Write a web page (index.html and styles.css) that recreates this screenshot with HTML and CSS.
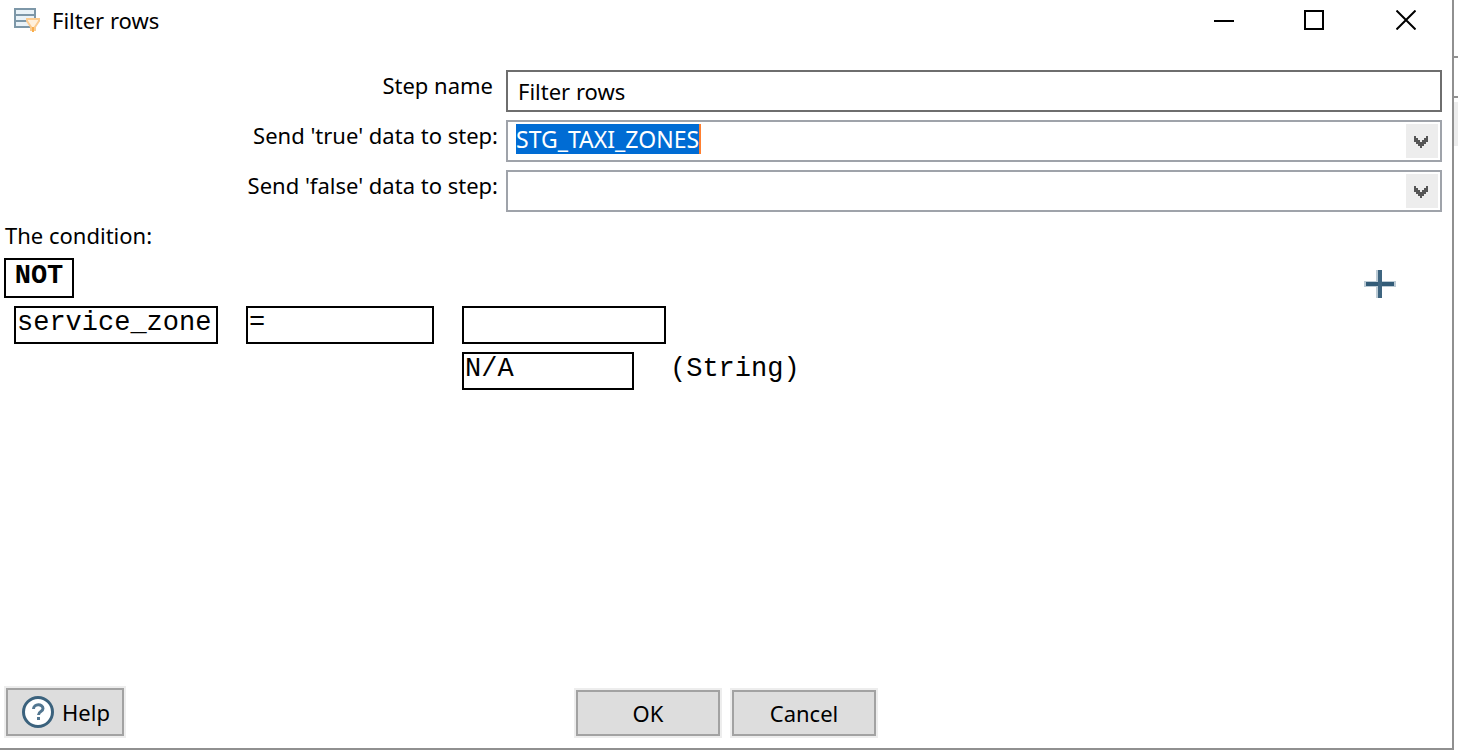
FILE: index.html
```html
<!DOCTYPE html>
<html lang="en">
<head>
<meta charset="utf-8">
<title>Filter rows</title>
<link rel="stylesheet" href="styles.css">
</head>
<body>
<main class="dialog">
  <header class="titlebar">
    <svg class="app-icon" width="26" height="24" viewBox="0 0 26 24" aria-hidden="true">
      <path d="M1 1h20v18H1z" fill="#e9f2f8" stroke="#7d97a8" stroke-width="2"/>
      <path d="M1 7h20M1 13h20" stroke="#7d97a8" stroke-width="2"/>
      <path d="M13 11h12v2l-4 6v3h-4v-3l-4-6z" fill="#fff0dc" stroke="#fbcb90" stroke-width="2"/>
      <path d="M19 19v5" stroke="#f9ae4c" stroke-width="2"/>
    </svg>
    <h1 class="title">Filter rows</h1>
    <button class="win-btn" type="button" aria-label="Minimize">
      <svg width="24" height="20" viewBox="0 0 24 20"><path d="M4 11h20" stroke="#000" stroke-width="2"/></svg>
    </button>
    <button class="win-btn" type="button" aria-label="Maximize">
      <svg width="20" height="20" viewBox="0 0 20 20"><path d="M1 1h18v18H1z" fill="none" stroke="#000" stroke-width="2"/></svg>
    </button>
    <button class="win-btn" type="button" aria-label="Close">
      <svg width="20" height="20" viewBox="0 0 20 20"><path d="M0.500 0.500l19 19M19.500 0.500l-19 19" stroke="#000" stroke-width="2"/></svg>
    </button>
  </header>

  <form class="form">
    <label class="label label-plain" for="step-name">Step name</label>
    <input class="text-input" id="step-name" type="text" value="Filter rows">

    <label class="label" for="true-step">Send 'true' data to step:</label>
    <div class="combo">
      <input class="combo-input combo-selected" id="true-step" type="text" role="combobox" aria-expanded="false" value="STG_TAXI_ZONES">
      <button class="combo-btn" type="button" aria-label="Show steps for true">
        <svg width="16" height="12" viewBox="0 0 16 12"><path d="M0 0h2v2h2v2h2v2h2v-2h2v-2h2v-2h2v6h-2v2h-2v2h-2v2h-2v-2h-2v-2h-2v-2h-2z" fill="#555" shape-rendering="crispEdges"/></svg>
      </button>
    </div>

    <label class="label" for="false-step">Send 'false' data to step:</label>
    <div class="combo">
      <input class="combo-input combo-empty" id="false-step" type="text" role="combobox" aria-expanded="false">
      <button class="combo-btn" type="button" aria-label="Show steps for false">
        <svg width="16" height="12" viewBox="0 0 16 12"><path d="M0 0h2v2h2v2h2v2h2v-2h2v-2h2v-2h2v6h-2v2h-2v2h-2v2h-2v-2h-2v-2h-2v-2h-2z" fill="#555" shape-rendering="crispEdges"/></svg>
      </button>
    </div>
  </form>

  <section class="condition">
    <h2 class="condition-title">The condition:</h2>
    <div class="condition-head">
      <button class="box not-btn" type="button">NOT</button>
      <button class="add-btn" type="button" aria-label="Add condition">
        <svg width="32" height="28" viewBox="0 0 32 28"><path d="M0 14h32M15 0v28" stroke="#bccbd5" stroke-width="6"/><path d="M2 14h28" stroke="#335c78" stroke-width="4"/><path d="M16 0v28" stroke="#3f6580" stroke-width="4"/></svg>
      </button>
    </div>
    <div class="condition-grid">
      <button class="box" type="button">service_zone</button>
      <button class="box" type="button">=</button>
      <button class="box" type="button" aria-label="Field"></button>
      <div class="value-row">
        <button class="box value-btn" type="button">N/A</button>
        <span class="value-type">(String)</span>
      </div>
    </div>
  </section>

  <footer class="footer">
    <button class="btn help-btn" type="button">
      <svg width="32" height="32" viewBox="0 0 32 32" aria-hidden="true">
        <circle cx="16" cy="16" r="14.500" fill="#fff" stroke="#3b627d" stroke-width="3"/>
        <path d="M11.500 13c0-5.500 9.500-5.500 9.500-.5 0 3.500-4.500 2.500-4.500 6.500M16.500 21v3" fill="none" stroke="#527690" stroke-width="3"/>
      </svg>
      Help
    </button>
    <div class="actions">
      <button class="btn" type="button">OK</button>
      <button class="btn" type="button">Cancel</button>
    </div>
  </footer>
</main>
<aside class="backdrop" aria-hidden="true">
  <div class="backdrop-field"></div>
  <div class="backdrop-bar"></div>
</aside>
</body>
</html>
```
FILE: styles.css
```css
* { box-sizing: border-box; }

body {
  margin: 0;
  display: flex;
  align-items: flex-start;
  min-height: 100vh;
  background: #fff;
  color: #000;
  font: 22px/30px "Noto Sans", "Open Sans", sans-serif;
}

button, input { font: inherit; color: inherit; }
button { padding: 0; border: 0; background: none; }
svg { display: block; }

.dialog {
  flex: 1;
  display: flex;
  flex-direction: column;
  min-height: calc(100vh - 4px);
  border: solid #909090;
  border-width: 0 2px 2px 0;
}

.titlebar {
  display: flex;
  align-items: center;
  height: 40px;
  padding-left: 14px;
}
.title {
  flex: 1;
  margin: 0 0 0 12px;
  font-size: 22px;
  font-weight: 400;
}
.win-btn {
  display: flex;
  align-items: center;
  justify-content: center;
  width: 92px;
  height: 40px;
}

.form {
  display: grid;
  grid-template-columns: 35% 1fr;
  row-gap: 8px;
  padding: 30px 10px 0 2px;
}
.label {
  padding-right: 8px;
  text-align: right;
}
.label-plain { padding-right: 13px; }
.text-input {
  width: 100%;
  height: 42px;
  padding: 0 10px;
  border: 2px solid #6e6e6e;
  background: #fff;
}
.combo {
  display: flex;
  align-items: flex-start;
  justify-content: space-between;
  height: 42px;
  padding: 2px;
  border: 2px solid #9fa3aa;
}
.combo-input {
  height: 30px;
  margin-left: 6px;
  padding: 0;
  border: 0;
  background: none;
  font-size: 23px;
}
.combo-empty { flex: 1; }
.combo-selected {
  field-sizing: content;
  border-right: 2px solid #ff7f30;
  background: #006cd4;
  color: #fff;
}
.combo-btn {
  display: flex;
  align-items: center;
  justify-content: center;
  width: 32px;
  height: 34px;
  padding-top: 2px;
  background: #ededed;
}

.condition {
  flex: 1;
  padding: 8px 56px 0 4px;
}
.condition-title {
  margin: 0 0 8px 1px;
  font-size: 22px;
  font-weight: 400;
}
.condition-head {
  display: flex;
  align-items: flex-end;
  justify-content: space-between;
  margin-bottom: 8px;
}
.box {
  height: 38px;
  padding: 0 1px 4px;
  border: 2px solid #000;
  font: 27px/30px "Liberation Mono", monospace;
  text-align: left;
}
.not-btn {
  width: 70px;
  height: 40px;
  font-weight: 700;
  text-align: center;
}
.condition-grid {
  display: grid;
  grid-template-columns: 204px 188px 204px;
  gap: 8px 28px;
  margin-left: 10px;
}
.value-row {
  grid-column: 3;
  display: flex;
  gap: 36px;
}
.value-btn {
  flex: none;
  width: 172px;
}
.value-type {
  font: 27px/34px "Liberation Mono", monospace;
}

.footer {
  display: grid;
  grid-template-columns: 1fr auto 1fr;
  align-items: end;
  padding: 0 6px 12px;
}
.actions {
  display: flex;
  gap: 12px;
}
.btn {
  width: 144px;
  height: 46px;
  border: 2px solid #a2a2a2;
  background: #ddd;
  box-shadow: 0 0 0 2px #ededed;
}
.help-btn {
  display: flex;
  align-items: center;
  gap: 8px;
  width: 118px;
  height: 48px;
  padding-left: 14px;
}

/* Edge of the window behind the dialog */
.backdrop {
  width: 4px;
  padding-top: 56px;
}
.backdrop-field {
  height: 42px;
  margin-bottom: 4px;
  border: solid #909090;
  border-width: 2px 0;
}
.backdrop-bar {
  height: 44px;
  background: #ededed;
}
```
